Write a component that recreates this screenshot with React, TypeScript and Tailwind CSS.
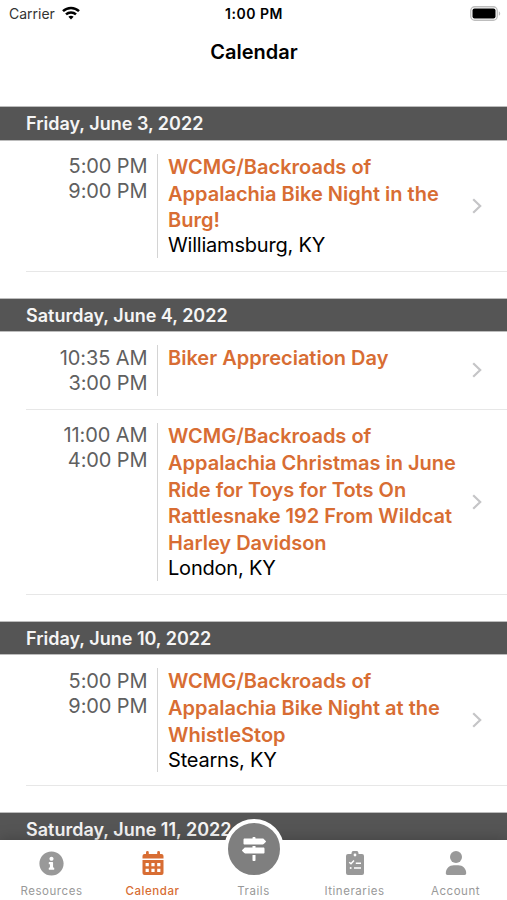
import { FaInfoCircle, FaMapSigns } from "react-icons/fa";

interface CalendarEvent {
  start: string;
  end: string;
  title: string[];
  location?: string;
}

interface Day {
  date: string;
  events: CalendarEvent[];
}

const days: Day[] = [
  {
    date: "Friday, June 3, 2022",
    events: [
      {
        start: "5:00 PM",
        end: "9:00 PM",
        title: ["WCMG/Backroads of", "Appalachia Bike Night in the", "Burg!"],
        location: "Williamsburg, KY",
      },
    ],
  },
  {
    date: "Saturday, June 4, 2022",
    events: [
      { start: "10:35 AM", end: "3:00 PM", title: ["Biker Appreciation Day"] },
      {
        start: "11:00 AM",
        end: "4:00 PM",
        title: [
          "WCMG/Backroads of",
          "Appalachia Christmas in June",
          "Ride for Toys for Tots On",
          "Rattlesnake 192 From Wildcat",
          "Harley Davidson",
        ],
        location: "London, KY",
      },
    ],
  },
  {
    date: "Friday, June 10, 2022",
    events: [
      {
        start: "5:00 PM",
        end: "9:00 PM",
        title: ["WCMG/Backroads of", "Appalachia Bike Night at the", "WhistleStop"],
        location: "Stearns, KY",
      },
    ],
  },
  { date: "Saturday, June 11, 2022", events: [] },
];

function StatusBar() {
  return (
    <div className="grid h-[27px] shrink-0 grid-cols-3 items-center pl-[9px] pr-[6px] text-[14px]">
      <div className="flex items-center gap-[7px]">
        <span className="text-[#333]">Carrier</span>
        <svg viewBox="0 0 18 14" className="mb-[2px] h-[14px] w-[18px]" fill="none" stroke="#000" strokeWidth="2.5">
          <path d="M1 5.2C5.5 .9 12.5 .9 17 5.2" />
          <path d="M4 8.4C6.8 5.8 11.2 5.8 14 8.4" />
          <path d="M6.4 10.8C7.9 9.5 10.1 9.5 11.6 10.8L9 13.4Z" fill="#000" stroke="none" />
        </svg>
      </div>
      <span className="whitespace-nowrap pr-[2px] text-center text-[14px] font-semibold tracking-[0.5px]">1:00 PM</span>
      <svg viewBox="0 0 31 15" className="mb-px h-[15px] w-[31px] justify-self-end">
        <rect x="0.75" y="0.75" width="26.5" height="13.5" rx="4" fill="#fff" stroke="#bdbdbd" strokeWidth="1.3" />
        <rect x="2.5" y="2.5" width="23" height="10" rx="2" fill="#000" />
        <path d="M28.8 5.2C30.7 6 30.7 9 28.8 9.8Z" fill="#bdbdbd" />
      </svg>
    </div>
  );
}

function EventRow({ event }: { event: CalendarEvent }) {
  return (
    <div className="ml-[26px] flex border-b border-[#e7e7e7] py-[13px]">
      <div className="w-[131.5px] shrink-0 border-r border-[#d4d4d4] pr-[9px] pt-[0.6px] text-right text-[20px] leading-[25px] tracking-[-0.1px] text-[#606060]">
        <div>{event.start}</div>
        <div>{event.end}</div>
      </div>
      <div className="min-w-0 flex-1 whitespace-nowrap pl-[10.5px] pt-[0.3px]">
        <div className="text-[20px] font-semibold leading-[26.8px] text-[#d86d33]">
          {event.title.map((line) => (
            <div key={line}>{line}</div>
          ))}
        </div>
        {event.location && (
          <div className="text-[20px] leading-[23.5px] tracking-[-0.2px] text-black">{event.location}</div>
        )}
      </div>
      <svg viewBox="0 0 10 16" className="mr-[25px] h-[16px] w-[10px] shrink-0 self-center" fill="none" stroke="#c5c5c7" strokeWidth="2.2">
        <path d="M1.2 1.2L8.2 8L1.2 14.8" />
      </svg>
    </div>
  );
}

function CalendarIcon() {
  return (
    <svg viewBox="0 0 22 24" className="h-[24px] w-[22px]">
      <g fill="#d86d33">
        <path d="M2.5 3H4V1.4A1.4 1.4 0 0 1 6.8 1.4V3H15.2V1.4A1.4 1.4 0 0 1 18 1.4V3H19.5A2 2 0 0 1 21.5 5V7.6H.5V5A2 2 0 0 1 2.5 3Z" />
        <path d="M.5 9H21.5V22A2 2 0 0 1 19.5 24H2.5A2 2 0 0 1 .5 22Z" />
      </g>
      <path d="M3.6 12H6.8V15.2H3.6ZM9.4 12H12.6V15.2H9.4ZM15.2 12H18.4V15.2H15.2ZM3.6 17.8H6.8V21H3.6ZM9.4 17.8H12.6V21H9.4ZM15.2 17.8H18.4V21H15.2Z" fill="#fff" />
    </svg>
  );
}

function ItineraryIcon() {
  return (
    <svg viewBox="0 0 18 24" className="h-[24px] w-[18px]">
      <path d="M2 3H5.4A3.6 3.6 0 0 1 12.6 3H16A2 2 0 0 1 18 5V22A2 2 0 0 1 16 24H2A2 2 0 0 1 0 22V5A2 2 0 0 1 2 3Z" fill="#999" />
      <circle cx="9" cy="4" r="1.4" fill="#fff" />
      <path d="M3.2 11.2L5 12.8L8 9.5M9.8 12.3H15M8 17H15" fill="none" stroke="#fff" strokeWidth="1.5" />
      <circle cx="4.7" cy="17" r="1" fill="#fff" />
    </svg>
  );
}

function UserIcon() {
  return (
    <svg viewBox="0 0 22 24" className="h-[24px] w-[22px]" fill="#999">
      <circle cx="11" cy="6" r="6" />
      <path d="M.8 22.3C.8 17.4 4.2 14.2 8.8 14.2H13.2C17.8 14.2 21.2 17.4 21.2 22.3C21.2 23.3 20.5 24 19.6 24H2.4C1.5 24 .8 23.3 .8 22.3Z" />
    </svg>
  );
}

const tabs = [
  { label: "Resources", icon: <FaInfoCircle className="size-[25px]" /> },
  { label: "Calendar", icon: <CalendarIcon />, active: true },
  { label: "Trails", raised: true },
  { label: "Itineraries", icon: <ItineraryIcon /> },
  { label: "Account", icon: <UserIcon /> },
];

function TabBar() {
  return (
    <nav className="relative z-10 grid h-[60px] shrink-0 grid-cols-5 bg-white px-px shadow-[0_0_14px_rgba(0,0,0,0.25)]">
      {tabs.map((tab) => (
        <div
          key={tab.label}
          className={
            "relative flex flex-col items-center pt-[10.5px] text-[11.5px] tracking-[0.55px] " +
            (tab.active ? "font-medium text-[#d86d33]" : "text-[#999]")
          }
        >
          <div className="flex h-[25px] items-center">{tab.icon}</div>
          {tab.raised && (
            <div className="absolute -top-[21px] flex size-[60px] items-center justify-center rounded-full border-4 border-white bg-[#7f7f7f] text-white">
              <FaMapSigns className="size-[24px]" />
            </div>
          )}
          <span className="mt-[7.5px] leading-[16px]">{tab.label}</span>
        </div>
      ))}
    </nav>
  );
}

export default function App() {
  return (
    <div className="flex h-[900px] w-[507px] flex-col overflow-hidden bg-white font-['Inter',sans-serif] text-black">
      <StatusBar />
      <header className="h-[79px] shrink-0 pl-px pt-[12px] text-center text-[20px] font-semibold leading-[26px]">
        Calendar
      </header>
      <main className="flex min-h-0 flex-1 flex-col gap-[26px] overflow-hidden">
        {days.map((day) => (
          <section key={day.date} className="shrink-0">
            <h2 className="h-[34.5px] border-y border-[#bcbcbc] bg-[#555] pl-[26px] text-[18px] font-semibold leading-[33px] text-[#f5f5f5]">
              {day.date}
            </h2>
            {day.events.map((event) => (
              <EventRow key={event.start} event={event} />
            ))}
          </section>
        ))}
      </main>
      <TabBar />
    </div>
  );
}
